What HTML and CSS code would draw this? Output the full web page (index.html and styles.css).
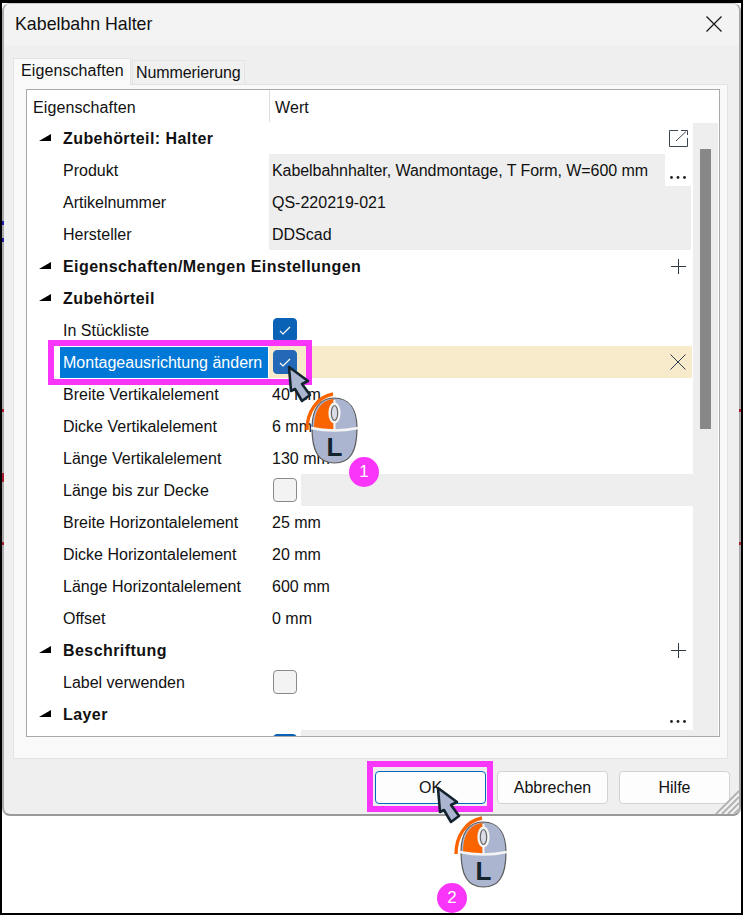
FILE: index.html
```html
<!DOCTYPE html>
<html lang="de">
<head>
<meta charset="utf-8">
<title>Kabelbahn Halter</title>
<link rel="stylesheet" href="styles.css">
</head>
<body>
<svg class="defs" width="0" height="0" aria-hidden="true">
  <symbol id="arrow" viewBox="-2 -2 28 40">
    <path d="M0 0 L19 14 L13 17 L21 28 L13 34 L6 22 L2 24 Z" fill="#abb5d0" stroke="#14242f" stroke-width="2.600" stroke-linejoin="round"/>
  </symbol>
  <symbol id="mouse-body" viewBox="0 0 60 76">
    <path d="M2 38 C2 20 12 5 28 2" fill="none" stroke="#fa6400" stroke-width="3.400"/>
    <path d="M7 36 C7 18 14 6 29 6 C45 6 52 18 52 36 C52 60 45 71 29.500 71 C14 71 7 60 7 36 Z" fill="#abb5d0" stroke="#5a5a5a" stroke-width="1.200"/>
    <path d="M9 36 C9 20 15 8 28.500 7 L28.500 38 Z" fill="#fa6400"/>
    <path d="M6 36 Q29.500 41 53 36" fill="none" stroke="#f4f4f4" stroke-width="2.400"/>
    <path d="M29.500 8 V39" stroke="#f4f4f4" stroke-width="2"/>
    <ellipse cx="29.500" cy="21" rx="4.600" ry="9" fill="#d9dce6" stroke="#f4f4f4" stroke-width="3"/>
    <ellipse cx="29.500" cy="21" rx="3.200" ry="7.500" fill="#d9dce6" stroke="#666" stroke-width="1.200"/>
  </symbol>
  <symbol id="dots3" viewBox="0 0 16 3">
    <circle cx="1.500" cy="1.500" r="1.400" fill="#222"/>
    <circle cx="8" cy="1.500" r="1.400" fill="#222"/>
    <circle cx="14.500" cy="1.500" r="1.400" fill="#222"/>
  </symbol>
</svg>
<div class="frame">
  <main class="dialog">
    <header class="titlebar">
      <h1 class="title">Kabelbahn Halter</h1>
      <svg class="close" width="16" height="16" viewBox="0 0 16 16"><path d="M0.500 0.500 L15.500 15.500 M15.500 0.500 L0.500 15.500" stroke="#1a1a1a" stroke-width="1.300" fill="none"/></svg>
    </header>
    <div class="tabs">
      <div class="tab active">Eigenschaften</div>
      <div class="tab">Nummerierung</div>
    </div>
    <section class="pane">
      <div class="list">
        <div class="rows">
          <div class="row head"><div class="name">Eigenschaften</div><div class="val">Wert</div></div>
          <div class="row section"><div class="name"><i class="tri"></i>Zubehörteil: Halter</div><div class="val">
            <svg class="tool" width="19" height="17" viewBox="0 0 19 17"><path d="M9 .5 H.5 V16.500 H18.500 V8 M12 .5 H18.500 V5 M7 11 L17 1.500" fill="none" stroke="#3a4650" stroke-width="1"/></svg>
          </div></div>
          <div class="row"><div class="name">Produkt</div><div class="val grey tight">Kabelbahnhalter, Wandmontage, T Form, W=600 mm<span class="dots-box"><svg class="dots" width="16" height="3"><use href="#dots3"/></svg></span></div></div>
          <div class="row"><div class="name">Artikelnummer</div><div class="val grey">QS-220219-021</div></div>
          <div class="row"><div class="name">Hersteller</div><div class="val grey">DDScad</div></div>
          <div class="row section"><div class="name"><i class="tri"></i>Eigenschaften/Mengen Einstellungen</div><div class="val">
            <svg class="tool plus" width="15" height="15" viewBox="0 0 15 15"><path d="M7.500 0 V15 M0 7.500 H15" stroke="#2e3a44" stroke-width="1"/></svg>
          </div></div>
          <div class="row section"><div class="name"><i class="tri"></i>Zubehörteil</div><div class="val"></div></div>
          <div class="row"><div class="name">In Stückliste</div><div class="val"><span class="check on"><svg width="12" height="9" viewBox="0 0 12 9"><path d="M1 5 L4 8 L11 1" fill="none" stroke="#fff" stroke-width="1.200"/></svg></span></div></div>
          <div class="row"><div class="name selected"><span>Montageausrichtung ändern</span></div><div class="val cream"><span class="check on hover"><svg width="12" height="9" viewBox="0 0 12 9"><path d="M1 5 L4 8 L11 1" fill="none" stroke="#fff" stroke-width="1.200"/></svg></span>
            <svg class="tool x" width="16" height="16" viewBox="0 0 16 16"><path d="M.5 .5 L15.500 15.500 M15.500 .5 L.5 15.500" stroke="#2e3a50" stroke-width="1"/></svg>
          </div></div>
          <div class="row"><div class="name">Breite Vertikalelement</div><div class="val">40 mm</div></div>
          <div class="row"><div class="name">Dicke Vertikalelement</div><div class="val">6 mm</div></div>
          <div class="row"><div class="name">Länge Vertikalelement</div><div class="val">130 mm</div></div>
          <div class="row"><div class="name">Länge bis zur Decke</div><div class="val"><span class="check"></span><span class="fill"></span></div></div>
          <div class="row"><div class="name">Breite Horizontalelement</div><div class="val">25 mm</div></div>
          <div class="row"><div class="name">Dicke Horizontalelement</div><div class="val">20 mm</div></div>
          <div class="row"><div class="name">Länge Horizontalelement</div><div class="val">600 mm</div></div>
          <div class="row"><div class="name">Offset</div><div class="val">0 mm</div></div>
          <div class="row section"><div class="name"><i class="tri"></i>Beschriftung</div><div class="val">
            <svg class="tool plus" width="15" height="15" viewBox="0 0 15 15"><path d="M7.500 0 V15 M0 7.500 H15" stroke="#2e3a44" stroke-width="1"/></svg>
          </div></div>
          <div class="row"><div class="name">Label verwenden</div><div class="val"><span class="check"></span></div></div>
          <div class="row section"><div class="name"><i class="tri"></i>Layer</div><div class="val"><svg class="dots free" width="16" height="3"><use href="#dots3"/></svg></div></div>
          <div class="row"><div class="name"></div><div class="val"><span class="check on"></span><span class="fill"></span></div></div>
        </div>
        <div class="scrollbar"><div class="thumb"></div></div>
      </div>
    </section>
    <footer class="footer">
      <button class="btn primary">OK</button>
      <button class="btn">Abbrechen</button>
      <button class="btn">Hilfe</button>
    </footer>
    <svg class="grip" width="24" height="24" viewBox="0 0 24 24"><path d="M1 24 L24 1 M7 24 L24 7 M13 24 L24 13 M19 24 L24 19" stroke="#b0b0b0" stroke-width="1.800"/></svg>
  </main>
  <i class="tick blue t-222"></i>
  <i class="tick blue t-239"></i>
  <i class="tick red t-410"></i>
  <i class="tick red t-473"></i>
  <i class="tick red t-543"></i>
  <i class="tick red right t-410"></i>
  <i class="tick red right t-543"></i>
  <div class="mark mark-row"></div>
  <div class="mark mark-ok"></div>
  <svg class="arrow arrow-1"><use href="#arrow"/></svg>
  <svg class="arrow arrow-2"><use href="#arrow"/></svg>
  <svg class="mouse mouse-1" viewBox="0 0 60 76"><use href="#mouse-body" width="60" height="76"/><text x="21.500" y="64" class="mouse-l">L</text></svg>
  <svg class="mouse mouse-2" viewBox="0 0 60 76"><use href="#mouse-body" width="60" height="76"/><text x="21.500" y="64" class="mouse-l">L</text></svg>
  <div class="badge badge-1">1</div>
  <div class="badge badge-2">2</div>
</div>
</body>
</html>
```
FILE: styles.css
```css
* { box-sizing: border-box; }
html, body { margin: 0; padding: 0; }
body {
  width: 743px;
  height: 915px;
  overflow: hidden;
  background: #fff;
  font-family: "Liberation Sans", Arial, sans-serif;
  font-size: 16px;
  color: #111;
}
.defs { position: absolute; }
.frame {
  position: relative;
  width: 743px;
  height: 915px;
  padding: 3px 2px 0 2px;
  background: #fff;
}
.frame::before {
  content: "";
  position: absolute;
  inset: 0;
  border-style: solid;
  border-color: #000;
  border-width: 3px 2px 2px 2px;
  pointer-events: none;
}
.dialog {
  position: relative;
  width: 739px;
  height: 813px;
  background: #efefef;
  border-radius: 8px;
  border-style: solid;
  border-color: #c9c9c9 #aaa #9a9a9a #aaa;
  border-width: 1px 2px 2px 2px;
  overflow: hidden;
  display: flex;
  flex-direction: column;
}
.titlebar {
  height: 42px;
  flex: none;
  background: #f3f3f3;
  display: flex;
  align-items: center;
  justify-content: space-between;
  padding: 0 17px 2px 11px;
}
.title { margin: 0; font-weight: 400; font-size: 17.800px; color: #111; }
.tabs {
  flex: none;
  display: flex;
  align-items: flex-end;
  height: 38px;
  padding: 0 0 0 9px;
  gap: 1px;
}
.tab {
  height: 24px;
  padding: 2px 3px 0;
  border: 1px solid #e4e4e4;
  border-bottom: 0;
  background: #f0f0f0;
  line-height: 20px;
  letter-spacing: -0.100px;
}
.tab.active {
  height: 27px;
  width: 118px;
  padding: 0 7px;
  line-height: 24px;
  background: #f9f9f9;
  position: relative;
  top: 1px;
  letter-spacing: 0.100px;
}
.pane {
  flex: none;
  width: 715px;
  height: 675px;
  margin-left: 9px;
  padding: 4px 7px 0 12px;
  background: #f9f9f9;
  border: 1px solid #e3e3e3;
}
.list {
  height: 648px;
  background: #fff;
  border: 1px solid #aaa;
  display: flex;
  overflow: hidden;
}
.rows { width: 666px; flex: none; overflow: hidden; }
.scrollbar {
  width: 25px;
  flex: none;
  margin: 33px 0 0 0;
  background: #eee;
  padding: 26px 7px 0;
}
.thumb { height: 280px; background: #888; }
.row {
  display: flex;
  height: 32px;
  align-items: stretch;
}
.name {
  width: 242px;
  flex: none;
  padding: 2px 0 0 36px;
  display: flex;
  align-items: center;
  position: relative;
}
.val {
  flex: 1;
  position: relative;
  padding: 2px 0 0 3px;
  display: flex;
  align-items: center;
  white-space: nowrap;
}
.head .name { padding: 4px 0 0 6px; letter-spacing: 0.100px; }
.head .val { padding: 4px 0 0 5px; border-left: 1px solid #ddd; letter-spacing: 0.100px; }
.section .name { font-weight: 700; white-space: nowrap; letter-spacing: 0.430px; }
.tri {
  position: absolute;
  left: 12px;
  top: 12px;
  width: 12px;
  height: 7px;
  background: #000;
  clip-path: polygon(100% 0, 100% 100%, 0 100%);
}
.grey { background: #eee; margin-right: 2px; }
.tight { letter-spacing: -0.065px; }
.cream { background: #f8ebcb; margin-right: 1px; }
.selected { padding: 1px 0 0 33px; }
.selected span {
  display: block;
  width: 208px;
  height: 31px;
  line-height: 32px;
  padding-left: 3px;
  background: #0078d7;
  color: #fff;
  white-space: nowrap;
}
.check {
  width: 24px;
  height: 24px;
  flex: none;
  margin: -2px 0 0 1px;
  border-radius: 4px;
  background: #f3f3f3;
  border: 1px solid #8a8a8a;
  display: inline-flex;
  align-items: center;
  justify-content: center;
}
.check.on { background: #0a62b6; border-color: #0a62b6; }
.check.hover { background: #2369b8; border-color: #2369b8; }
.fill { flex: 1; align-self: stretch; margin: -2px 0 0 4px; background: #eee; }
.tool { position: absolute; }
.section .tool { right: 5px; top: 8px; }
.section .tool.plus { right: 7px; top: 9px; }
.tool.x { right: 6px; top: 8px; }
.dots-box {
  position: absolute;
  right: -1px;
  top: 0;
  width: 27px;
  height: 32px;
  background: #fff;
}
.dots { position: absolute; left: 5px; top: 22px; }
.dots.free { left: auto; right: 7px; top: 22px; }
.footer {
  flex: 1;
  display: flex;
  justify-content: flex-end;
  gap: 11px;
  padding: 12px 9px 0 0;
}
.btn {
  width: 111px;
  height: 33px;
  padding: 0;
  background: #fdfdfd;
  border: 1px solid #d2d2d2;
  border-radius: 4px;
  font: inherit;
  color: #111;
}
.btn.primary { border-color: #0067c0; }
.grip { position: absolute; right: 0; bottom: 0; }
.tick { position: absolute; left: 2px; width: 2px; height: 3px; }
.tick.right { left: 739px; }
.tick.blue { background: #1c1ca0; height: 4px; }
.tick.red { background: #a81c2c; }
.t-222 { top: 221px; }
.t-239 { top: 238px; }
.t-410 { top: 409px; }
.t-473 { top: 473px; height: 9px; }
.t-543 { top: 542px; }
.mark { position: absolute; border: 6px solid #f935f9; }
.mark-row { left: 48px; top: 340px; width: 264px; height: 45px; }
.mark-ok { left: 367px; top: 761px; width: 126px; height: 51px; }
.arrow { position: absolute; width: 28px; height: 40px; }
.arrow-1 { left: 287px; top: 365px; }
.arrow-2 { left: 436px; top: 786px; }
.mouse { position: absolute; width: 60px; height: 76px; }
.mouse-1 { left: 305px; top: 392px; }
.mouse-2 { left: 454px; top: 816px; }
.mouse-l { font-family: "Liberation Sans", Arial, sans-serif; font-weight: 700; font-size: 26px; fill: #14242f; }
.badge {
  position: absolute;
  width: 30px;
  height: 30px;
  border-radius: 50%;
  background: #f935f9;
  color: #fff;
  text-align: center;
  line-height: 30px;
  font-size: 17px;
}
.badge-1 { left: 349px; top: 457px; }
.badge-2 { left: 437px; top: 883px; }
```
